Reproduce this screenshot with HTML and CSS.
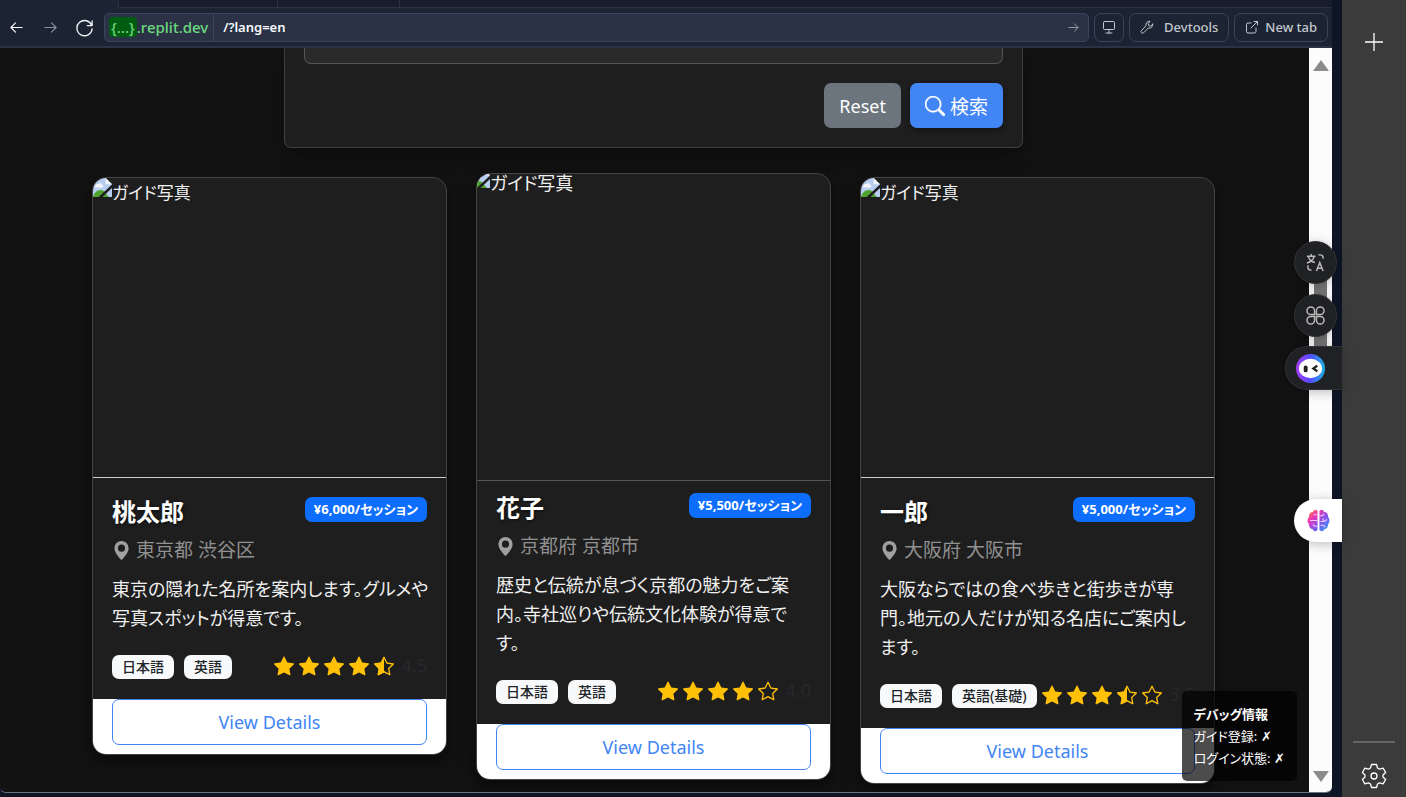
FILE: index.html
```html
<!DOCTYPE html>
<html lang="ja">
<head>
<meta charset="utf-8">
<meta name="viewport" content="width=device-width, initial-scale=1">
<title>ガイド検索</title>
<link rel="stylesheet" href="styles.css">
</head>
<body>
<svg class="defs" aria-hidden="true">
  <symbol id="star-full" viewBox="0 0 16 16"><path d="M3.612 15.443c-.386.198-.824-.149-.746-.592l.83-4.73L.173 6.765c-.329-.314-.158-.888.283-.95l4.898-.696L7.538.792c.197-.39.73-.39.927 0l2.184 4.327 4.898.696c.441.062.612.636.282.95l-3.522 3.356.83 4.73c.078.443-.36.79-.746.592L8 13.187l-4.389 2.256z"/></symbol>
  <symbol id="star-empty" viewBox="0 0 16 16"><path d="M2.866 14.85c-.078.444.36.791.746.593l4.39-2.256 4.389 2.256c.386.198.824-.149.746-.592l-.83-4.73 3.522-3.356c.33-.314.16-.888-.282-.95l-4.898-.696L8.465.792a.513.513 0 0 0-.927 0L5.354 5.12l-4.898.696c-.441.062-.612.636-.283.95l3.523 3.356-.83 4.73zm4.905-2.767-3.686 1.894.694-3.957a.56.56 0 0 0-.163-.505L1.71 6.745l4.052-.576a.53.53 0 0 0 .393-.288L8 2.223l1.847 3.658a.53.53 0 0 0 .393.288l4.052.575-2.906 2.77a.56.56 0 0 0-.163.506l.694 3.957-3.686-1.894a.5.5 0 0 0-.461 0z"/></symbol>
  <symbol id="star-half" viewBox="0 0 16 16"><use href="#star-empty"/><path d="M8 1v12.2l-4.4 2.2-.7-.5.8-4.8L.4 6.5l.1-.6 4.9-.8z"/></symbol>
  <symbol id="pin" viewBox="0 0 16 16"><path d="M8 16s6-5.686 6-10A6 6 0 0 0 2 6c0 4.314 6 10 6 10m0-7a3 3 0 1 1 0-6 3 3 0 0 1 0 6"/></symbol>
  <symbol id="broken" viewBox="0 0 18 18"><path fill="#b9cdf0" d="M0 0h12l6 6v12H0z"/><path fill="#f4f6fa" d="M12 0v6h6zM2 8c0-2 2-3 3-2 1-2 4-1 4 1 1 0 1 2 0 2H3c-1 0-1-1-1-1"/><path fill="#4ea32d" d="M0 18c1-5 6-8 10-6l5 6z"/><path stroke="#1e1e1e" stroke-width="2.5" d="M5 20 20 6"/></symbol>
</svg>
<div class="shell">
  <div class="browser">
    <div class="pane">
      <div class="tabs"><span class="tab-current"></span><span class="tab tab-wide"></span><span class="tab tab-narrow"></span><span class="tab tab-rest"></span></div>
      <header class="toolbar">
        <button class="nav" aria-label="Back"><svg viewBox="0 0 16 16"><path d="M14 8H2m5-5L2 8l5 5"/></svg></button>
        <button class="nav dim" aria-label="Forward"><svg viewBox="0 0 16 16"><path d="M2 8h12M9 3l5 5-5 5"/></svg></button>
        <button class="nav nav-reload" aria-label="Reload"><svg viewBox="0 0 20 20"><path d="M18 3v5h-5M17.6 8A8 8 0 1 0 18 11.500"/></svg></button>
        <div class="address">
          <span class="host"><b>{...}</b>.replit.dev</span>
          <input class="path" type="text" value="/?lang=en" aria-label="Path">
          <button class="go" aria-label="Go"><svg viewBox="0 0 12 12"><path d="M1 6h10M7 2l4 4-4 4"/></svg></button>
        </div>
        <button class="tool tool-icon" aria-label="Screen size"><svg viewBox="0 0 14 14"><path d="M2.500 1.500h9q1 0 1 1v6q0 1-1 1h-9q-1 0-1-1v-6q0-1 1-1zM7 10v3M4 13h6"/></svg></button>
        <button class="tool"><svg viewBox="0 0 14 14"><path d="M12.800 4.200 10.700 6 8.800 5.600 8.200 3.600 10 1.300A3.500 3.500 0 0 0 6 5.700L1.500 10.500a1.500 1.500 0 0 0 2.200 2.200L8.300 8A3.500 3.500 0 0 0 12.800 4.200z"/></svg><span class="dev">Devtools</span></button>
        <button class="tool"><svg viewBox="0 0 14 14"><path d="M6 3H3Q1.500 3 1.500 4.500v7Q1.500 13 3 13h6.500q1.500 0 1.500-1.500V8M9 1.500h3.500V5M12.500 1.500 6 8"/></svg>New tab</button>
      </header>
      <div class="viewport">
        <main class="page">
          <form class="search">
            <input class="keyword" type="text" aria-label="Keyword">
            <div class="actions">
              <button class="btn btn-reset" type="reset">Reset</button>
              <button class="btn btn-search" type="button"><svg viewBox="0 0 16 16"><path d="M11.742 10.344a6.500 6.500 0 1 0-1.397 1.398h-.001q.044.06.098.115l3.850 3.850a1 1 0 0 0 1.415-1.414l-3.850-3.850a1 1 0 0 0-.115-.1zM12 6.500a5.500 5.500 0 1 1-11 0 5.500 5.500 0 0 1 11 0"/></svg>検索</button>
            </div>
          </form>
          <section class="cards">
            <article class="card">
              <div class="photo"><svg><use href="#broken"/></svg><span>ガイド写真</span></div>
              <div class="card-body">
                <div class="head"><h2>桃太郎</h2><span class="price">¥6,000/セッション</span></div>
                <p class="place"><svg><use href="#pin"/></svg>東京都 渋谷区</p>
                <p class="desc">東京の隠れた名所を案内します。グルメや<br>写真スポットが得意です。</p>
                <div class="meta"><div class="langs"><span>日本語</span><span>英語</span></div>
                  <div class="rating"><svg><use href="#star-full"/></svg><svg><use href="#star-full"/></svg><svg><use href="#star-full"/></svg><svg><use href="#star-full"/></svg><svg><use href="#star-half"/></svg><span>4.5</span></div></div>
              </div>
              <div class="card-foot"><a class="details" href="#momotaro">View Details</a></div>
            </article>
            <article class="card raised">
              <div class="photo"><svg><use href="#broken"/></svg><span>ガイド写真</span></div>
              <div class="card-body">
                <div class="head"><h2>花子</h2><span class="price">¥5,500/セッション</span></div>
                <p class="place"><svg><use href="#pin"/></svg>京都府 京都市</p>
                <p class="desc">歴史と伝統が息づく京都の魅力をご案<br>内。寺社巡りや伝統文化体験が得意で<br>す。</p>
                <div class="meta"><div class="langs"><span>日本語</span><span>英語</span></div>
                  <div class="rating"><svg><use href="#star-full"/></svg><svg><use href="#star-full"/></svg><svg><use href="#star-full"/></svg><svg><use href="#star-full"/></svg><svg><use href="#star-empty"/></svg><span>4.0</span></div></div>
              </div>
              <div class="card-foot"><a class="details" href="#hanako">View Details</a></div>
            </article>
            <article class="card">
              <div class="photo"><svg><use href="#broken"/></svg><span>ガイド写真</span></div>
              <div class="card-body">
                <div class="head"><h2>一郎</h2><span class="price">¥5,000/セッション</span></div>
                <p class="place"><svg><use href="#pin"/></svg>大阪府 大阪市</p>
                <p class="desc">大阪ならではの食べ歩きと街歩きが専<br>門。地元の人だけが知る名店にご案内し<br>ます。</p>
                <div class="meta"><div class="langs"><span>日本語</span><span>英語(基礎)</span></div>
                  <div class="rating"><svg><use href="#star-full"/></svg><svg><use href="#star-full"/></svg><svg><use href="#star-full"/></svg><svg><use href="#star-half"/></svg><svg><use href="#star-empty"/></svg><span>3.5</span></div></div>
              </div>
              <div class="card-foot"><a class="details" href="#ichiro">View Details</a></div>
            </article>
          </section>
        </main>
        <div class="scrollbar"><i class="arrow up"></i><i class="thumb"></i><i class="arrow down"></i></div>
        <aside class="debug"><strong>デバッグ情報</strong><span>ガイド登録: ✗</span><span>ログイン状態: ✗</span></aside>
      </div>
    </div>
    <button class="float translate" aria-label="Translate"><svg viewBox="0 0 20 20"><path d="M1 3.500h9M5.500 1v2.500M2.500 4Q4 9 9.500 10M8.500 4Q7 9 1 10.500M13 2h2q3 0 3 3v1M2 13v2q0 3 3 3h1M11 19l3.500-9 3.500 9M12.200 16h4.600"/></svg></button>
    <button class="float apps" aria-label="Apps"><svg viewBox="0 0 20 20"><path d="M9 9H5a4 4 0 1 1 4-4zM11 9V5a4 4 0 1 1 4 4zM9 11v4a4 4 0 1 1-4-4zM11 11h4a4 4 0 1 1-4 4z"/></svg></button>
    <button class="float assistant" aria-label="Assistant"><svg viewBox="0 0 30 30"><defs><linearGradient id="ring"><stop stop-color="#a43df0"/><stop offset=".5" stop-color="#534dff"/><stop offset="1" stop-color="#19b2e0"/></linearGradient></defs><circle cx="15" cy="15" r="15" fill="url(#ring)"/><ellipse cx="15" cy="15" rx="12" ry="10" fill="#fff"/><rect x="8" y="12" width="4" height="7" rx="2" fill="#222"/><path d="m22 12-4 3 4 3" fill="none" stroke="#222" stroke-width="2.500"/></svg></button>
    <button class="float brain" aria-label="Brain"><svg viewBox="0 0 24 24"><defs><linearGradient id="mind" x1="0" y1="0" x2="1" y2="1"><stop stop-color="#ff9d20"/><stop offset=".3" stop-color="#ee35b4"/><stop offset=".6" stop-color="#8058f0"/><stop offset="1" stop-color="#1ea9ff"/></linearGradient></defs><path fill="url(#mind)" d="M11 2Q8-1 6 3 2 3 2 8-1 12 2 16q0 5 4 5 2 4 5 1V2zm2 0v20q3 3 5-1 4 0 4-5 3-4 0-8 0-5-4-5-2-4-5-1z"/><path fill="none" stroke="#f3c9ff" stroke-width="1.200" d="M11 6H7M3 12h8M11 18H8l-2-2M13 7h3l2-2M14 13h4l3-2M14 17h3l2 2M17 13v-3"/></svg></button>
  </div>
  <nav class="side">
    <button aria-label="Add"><svg viewBox="0 0 18 18"><path d="M9 0v18M0 9h18"/></svg></button>
    <div class="side-end"><hr><button aria-label="Settings"><svg class="gear" viewBox="0 0 26 26"><path d="M10.500 1.500h5l1 3.500 2 1.200 3.600-1 2.500 4.300-2.600 2.500v2l2.600 2.500-2.500 4.300-3.600-1-2 1.200-1 3.500h-5l-1-3.500-2-1.200-3.600 1-2.500-4.300L4 14v-2L1.400 9.500l2.500-4.300 3.600 1 2-1.200z"/><circle cx="13" cy="13" r="3"/></svg></button></div>
  </nav>
</div>
</body>
</html>
```
FILE: styles.css
```css
* { box-sizing: border-box; }
body { margin: 0; font-family: "Noto Sans", "Noto Sans CJK JP", sans-serif; font-feature-settings: "palt"; background: #0e1525; }
button, input { font: inherit; }
button { cursor: pointer; padding: 0; border: 0; background: none; }
svg { display: block; flex: none; }
.defs { position: absolute; width: 0; height: 0; }

.shell { display: flex; height: 100vh; min-height: 480px; overflow: hidden; }
.browser { position: relative; display: flex; flex: 1; min-width: 0; padding: 0 10px 4px 0; background: #0e1525; }
.pane { display: flex; flex: 1; flex-direction: column; min-width: 0; overflow: hidden; border-bottom: 1px solid #6b7280; border-radius: 0 0 6px 6px; }

.tabs { display: flex; height: 8px; background: #1c2333; }
.tab-current { width: 118px; }
.tab { border-left: 1px solid #2b3245; border-bottom: 1px solid #2b3245; background: #171d2d; }
.tab-wide { width: 159px; }
.tab-narrow { width: 122px; }
.tab-rest { flex: 1; }

.toolbar { display: flex; align-items: center; gap: 5px; height: 40px; padding: 0 4px 0 0; border-bottom: 2px solid #2b3245; background: #1c2333; color: #c2c8cc; font: 500 14px/20px "Noto Sans", sans-serif; }
.toolbar svg { width: 14px; height: 14px; fill: none; stroke: currentColor; stroke-width: 1; stroke-linecap: round; stroke-linejoin: round; }
.nav { display: flex; justify-content: center; width: 29px; color: #f5f9fc; }
.toolbar .nav svg { width: 15px; height: 15px; stroke-width: 1.2; }
.nav:first-child { margin-left: 2px; }
.toolbar .nav-reload svg { width: 19px; height: 19px; stroke-width: 1.4; }
.toolbar .dim { color: #8a91a0; }
.address { display: flex; flex: 1; align-items: center; min-width: 0; height: 29px; border: 1px solid #3c445c; border-radius: 5px; background: #2b3245; }
.host { display: flex; align-items: center; height: 27px; padding: 0 5px 0 4px; border-right: 1px solid #3c445c; color: #6cd97e; font-size: 15px; }
.host b { padding: 0 2px; border-radius: 4px; background: #005c10; font-weight: 500; }
.path { flex: 1; min-width: 0; height: 27px; padding: 0 9px; border: 0; outline: 0; background: none; color: #f5f9fc; font-size: 13px; font-weight: 600; }
.go { padding: 0 9px; color: #9da2a6; }
.toolbar .go svg { width: 11px; height: 11px; }
.tool { display: flex; align-items: center; gap: 6px; height: 29px; padding: 0 10px; border: 1px solid #3c445c; border-radius: 7px; color: inherit; font-size: 13px; }
.tool-icon { padding: 0 7px; }
.dev { margin-left: 4px; }

.viewport { position: relative; display: flex; flex: 1; min-height: 0; background: #121212; }
.page { flex: 1; min-width: 0; padding-right: 2px; overflow: hidden; }
.search { max-width: 739px; margin: 0 auto 29px; padding: 0 19px 19px; border: 1px solid #3f3f3f; border-top: 0; border-radius: 0 0 7px 7px; background: #1e1e1e; box-shadow: 0 8px 16px rgba(0, 0, 0, .3); }
.keyword { display: block; width: 100%; height: 16px; border: 1px solid #555; border-top: 0; border-radius: 0 0 7px 7px; background: #2a2a2a; color: #eee; }
.actions { display: flex; justify-content: flex-end; gap: 9px; padding-top: 19px; }
.btn { display: flex; align-items: center; gap: 5px; height: 45px; padding: 0 15px; border-radius: 7px; color: #fff; font-size: 18px; }
.btn-reset { background: #6c757d; }
.btn-search { background: #4285f4; font-size: 19px; box-shadow: 0 2px 5px rgba(0, 0, 0, .4); }
.btn svg { width: 20px; height: 20px; fill: currentColor; stroke: currentColor; stroke-width: .4; }

.cards { display: grid; grid-template-columns: repeat(3, 1fr); align-items: start; gap: 29px; max-width: 1123px; margin: 0 auto; }
.card { overflow: hidden; border: 1px solid #444; border-radius: 14px; background: #1e1e1e; box-shadow: 0 6px 16px rgba(0, 0, 0, .5); color: #f0f0f0; font-size: 19px; line-height: 29px; }
.raised { margin-top: -4px; }
.photo { display: flex; height: 300px; border-bottom: 1px solid #ccc; font-size: 17px; line-height: 19px; }
.photo svg { width: 19px; height: 19px; }
.photo span { padding-top: 5px; }
.raised .photo { height: 307px; border-color: #555; font-size: 18px; }
.raised .photo svg { margin: -5px 0 0 -6px; }
.raised .photo span { padding-top: 0; }
.card-body { padding: 19px 19px 20px; }
.raised .card-body { padding-top: 12px; }
.head { display: flex; justify-content: space-between; align-items: flex-start; }
h2 { margin: 0; color: #fff; font-size: 24px; line-height: 29px; font-weight: 700; text-shadow: 1px 1px 3px rgba(0, 0, 0, .6); }
.price { padding: 0 9px; border-radius: 7px; background: #0d6efd; color: #fff; font-size: 13px; line-height: 25px; font-weight: 700; }
.place { display: flex; align-items: center; gap: 5px; margin: 10px 0; color: #909090; }
.place svg { width: 19px; height: 19px; fill: #a0a0a0; }
.desc { margin: 0 0 19px; font-size: 18px; white-space: nowrap; }
.meta { display: flex; justify-content: space-between; align-items: flex-end; height: 27px; }
.langs { display: flex; gap: 10px; }
.langs span { padding: 0 10px; border-radius: 7px; background: #f8f9fa; color: #212529; font-size: 14px; line-height: 24px; font-weight: 500; white-space: nowrap; }
.rating { display: flex; align-items: center; gap: 5px; height: 27px; color: #25292d; font-size: 18px; }
.rating svg { width: 20px; height: 20px; fill: #ffc107; }
.rating span { margin-left: 3px; }
.card-foot { padding: 0 19px 9px; background: #fff; }
.details { display: block; height: 46px; border: 1px solid #4285f4; border-radius: 7px; color: #4285f4; font-size: 18px; line-height: 44px; text-align: center; text-decoration: none; }

.scrollbar { display: flex; flex-direction: column; align-items: center; justify-content: space-between; width: 23px; padding: 12px 0 10px; background: #fcfcfc; }
.arrow { border: 8px solid transparent; }
.up { border-top: 0; border-bottom: 11px solid #8b8b8b; }
.down { border-bottom: 0; border-top: 11px solid #8b8b8b; }
.thumb { width: 13px; height: 100px; margin-bottom: 230px; background: #777; }
.debug { position: absolute; right: 35px; bottom: 11px; display: flex; flex-direction: column; padding: 12px; border-radius: 5px; background: rgba(0, 0, 0, .7); color: #fff; font-size: 13px; line-height: 22px; }

.float { position: absolute; display: flex; align-items: center; justify-content: center; width: 43px; height: 43px; border: 1px solid #333; border-radius: 50%; background: #202124; box-shadow: 0 2px 12px rgba(0, 0, 0, .25); color: #bbb; }
.float svg { width: 19px; height: 19px; fill: none; stroke: currentColor; stroke-width: 1.5; }
.translate { top: 241px; right: 5px; }
.apps { top: 294px; right: 5px; }
.assistant { top: 346px; right: 0; justify-content: flex-start; width: 57px; height: 44px; padding-left: 10px; border-right: 0; border-radius: 22px 0 0 22px; }
.float.assistant svg { width: 29px; height: 29px; stroke: none; }
.brain { top: 499px; right: 0; width: 48px; border: 0; border-radius: 22px 0 0 22px; background: #fff; }
.float.brain svg { width: 23px; height: 23px; stroke: none; }

.side { display: flex; flex-direction: column; justify-content: space-between; align-items: center; width: 64px; padding: 33px 0 8px; background: #3b3b3b; }
.side svg { width: 18px; height: 18px; fill: none; stroke: #fff; stroke-width: 1.3; stroke-linejoin: round; }
.side .gear { width: 26px; height: 26px; }
.side-end { display: flex; flex-direction: column; align-items: center; gap: 20px; }
.side hr { width: 42px; margin: 0; border: 0; border-top: 2px solid #666; }
```
